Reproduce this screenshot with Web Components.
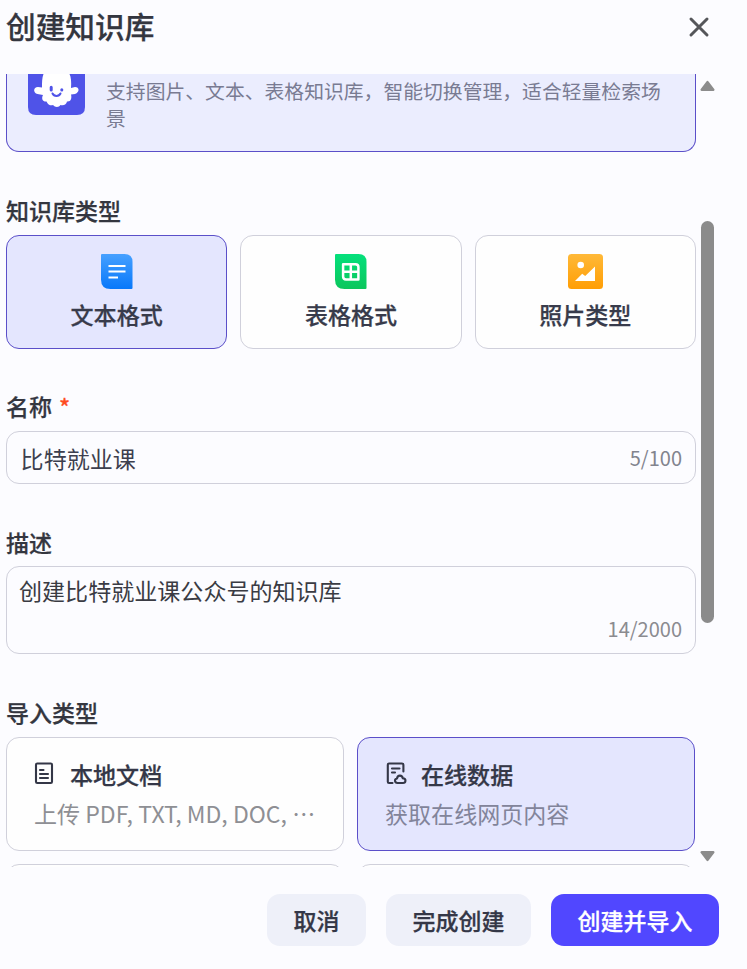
<!DOCTYPE html>
<html lang="zh-CN">
<head>
<meta charset="utf-8">
<title>创建知识库</title>
<style>
html,body{margin:0;height:100%;background:#fcfcff;overflow:hidden}
body{font-family:"Noto Sans CJK SC","Noto Sans",sans-serif;color:#34363f;font-size:23.05px}
</style>
</head>
<body>
<kb-dialog heading="创建知识库">
  <kb-banner>支持图片、文本、表格知识库，智能切换管理，适合轻量检索场景</kb-banner>
  <kb-section label="知识库类型">
    <kb-type kind="text" selected>文本格式</kb-type>
    <kb-type kind="table">表格格式</kb-type>
    <kb-type kind="photo">照片类型</kb-type>
  </kb-section>
  <kb-section label="名称" required><kb-field count="5/100">比特就业课</kb-field></kb-section>
  <kb-section label="描述" compact><kb-field multiline count="14/2000">创建比特就业课公众号的知识库</kb-field></kb-section>
  <kb-section label="导入类型" columns="2">
    <kb-import kind="file" heading="本地文档">上传 PDF, TXT, MD, DOC, …</kb-import>
    <kb-import kind="online" heading="在线数据" selected>获取在线网页内容</kb-import>
    <kb-import kind="none"></kb-import>
    <kb-import kind="none"></kb-import>
  </kb-section>
  <kb-button slot="footer">取消</kb-button>
  <kb-button slot="footer">完成创建</kb-button>
  <kb-button slot="footer" primary>创建并导入</kb-button>
</kb-dialog>
<script>
class Base extends HTMLElement{
  connectedCallback(){
    if(this.shadowRoot)return;
    this.attachShadow({mode:'open'}).innerHTML='<style>*{box-sizing:border-box}:host{box-sizing:border-box}'+this.css()+'</style>'+this.html();
  }
  attr(n){return this.getAttribute(n)||''}
}
const medium='font-weight:500;-webkit-text-stroke:.25px currentColor;';
customElements.define('kb-scrollbar',class extends Base{
  css(){return `:host{width:15px;flex:none;display:flex;flex-direction:column;align-items:center;padding:6px 0 5px}
    svg{display:block;width:15px;height:12px;flex:none;fill:#8c8c8c;stroke:#8c8c8c;stroke-width:2.600;stroke-linejoin:round}
    .track{flex:1;width:13px;padding-top:129px}.thumb{height:402px;border-radius:7px;background:#8b8b8b}`}
  html(){return `<svg viewBox="0 0 15 12"><path d="M7.500 2.200 13.200 9.800H1.800Z"/></svg><div class="track"><div class="thumb"></div></div><svg viewBox="0 0 15 12"><path d="M1.800 2.200H13.200L7.500 9.800Z"/></svg>`}
});
customElements.define('kb-dialog',class extends Base{
  css(){return `:host{display:flex;flex-direction:column;width:747px;height:969px}
    header{height:74px;flex:none;display:flex;justify-content:space-between;align-items:flex-start;padding:4px 37px 0 6px}
    h1{margin:0;font-size:29.7px;${medium}line-height:43px}
    header svg{width:22px;height:22px;margin-top:12px;stroke:#55565a;stroke-width:3;stroke-linecap:round}
    main{height:793px;flex:none;display:flex;overflow:hidden;padding-left:6px;gap:4px}
    .content{width:690px;display:flex;flex-direction:column;flex:none}
    footer{flex:1;display:flex;justify-content:flex-end;align-items:flex-start;gap:20px;padding:27px 28px 0 0}`}
  html(){return `<header><h1>${this.attr('heading')}</h1><svg viewBox="0 0 22 22"><path d="M3 3 19 19M19 3 3 19"/></svg></header>
    <main><div class="content"><slot></slot></div><kb-scrollbar></kb-scrollbar></main><footer><slot name="footer"></slot></footer>`}
});
customElements.define('kb-banner',class extends Base{
  css(){return `:host{display:flex;gap:21px;height:78px;flex:none;border:1px solid #5b4fc9;border-top:0;border-radius:0 0 13px 13px;background:#ebedfe;padding:0 26px 0 21px;color:#797b92;font-size:19.82px;line-height:27px}
    svg{width:57px;height:41px;flex:none;display:block}p{margin:3px 0 0;flex:1}`}
  html(){return `<svg viewBox="0 0 57 41"><path fill="#4f53e8" d="M0 0H57V33Q57 41 49 41H8Q0 41 0 33Z"/>
    <path fill="#fff" d="M15.500 0C14 4 14 8 14 13.500L10 13C5 13 5 19 9.500 20L15 21C13 25 15 28 18.500 27.500C20 31 23 32 25 31C27 33.500 31 33.500 32.500 31C36 32 38.500 30 39 27.500C43 28 44 24 43 20.500L47 20C52 18 51.500 13 47 13L43 14C43.500 8 43 3 41.500 0Z"/>
    <path d="M24.500 19.500C26 22.700 31 22.700 32.500 19.500" fill="none" stroke="#4f53e8" stroke-width="2" stroke-linecap="round"/><path d="M23.200 13.300V16M33.800 15.800V16" stroke="#4f53e8" stroke-width="3" stroke-linecap="round"/></svg><p><slot></slot></p>`}
});
customElements.define('kb-section',class extends Base{
  css(){return `:host{display:block;flex:none;margin-top:41px}:host([required]){margin-top:40px}
    :host([columns]){width:689px}
    h2{margin:0 0 8px;height:34px;font-size:23px;line-height:34px;${medium}}i{font-style:normal;color:#ff4b22;margin-left:7px}
    :host([compact]) h2{margin-bottom:7px}
    .row{display:grid;grid-auto-flow:column;grid-auto-columns:minmax(0,1fr);gap:13px}
    .two{grid-auto-flow:row;grid-template-columns:repeat(2,minmax(0,1fr))}`}
  html(){return `<h2>${this.attr('label')}${this.hasAttribute('required')?'<i>*</i>':''}</h2><div class="row ${this.attr('columns')?'two':''}"><slot></slot></div>`}
});
const card=`border:1px solid #d0d0db;border-radius:13px;background:#fefefe;height:114px;`;
const selected=`:host([selected]){background:#e4e6fe;border-color:#5b4fc9}`;
customElements.define('kb-type',class extends Base{
  css(){return `:host{display:flex;flex-direction:column;align-items:center;${card}padding-top:18px;${medium}line-height:34px;color:#383b4b}${selected}
    svg{display:block;width:36px;height:36px;margin-bottom:7px}`}
  html(){
    const k=this.attr('kind');
    const c={text:['#46a0ff','#0878fa'],table:['#05e07c','#0bc65c'],photo:['#ffb938','#ff9e05']}[k];
    const shape=k==='photo'?'<rect x="1" y="0" width="35" height="35" rx="3.500" fill="url(#g)"/>':'<path fill="url(#g)" d="M3 0H25.500Q33.500 0 33.500 8V34Q33.500 35 32.500 35H11.500Q2 35 2 25.500V1Q2 0 3 0Z"/>';
    const mark={
      text:'<path d="M9.500 12H26.500M9.500 17.500H26.500M9.500 23.500H19" stroke="#fff" stroke-width="2.100"/>',
      table:'<path d="M10.100 10.200H22.500Q25.400 10.200 25.400 13V25.400H13Q10.100 25.400 10.100 22.500ZM17.800 10.200V25.400M10 17.800H25.400" fill="none" stroke="#fff" stroke-width="2.500" stroke-linejoin="round"/>',
      photo:'<circle cx="13.700" cy="11" r="3.300" fill="#fff"/><path fill="#fff" d="M8 27 15.200 19.700 18.200 21.900 28 12.500V27Z"/>'}[k];
    return `<svg viewBox="0 0 36 36"><defs><linearGradient id="g" x2="0" y2="1"><stop stop-color="${c[0]}"/><stop offset="1" stop-color="${c[1]}"/></linearGradient></defs>${shape}${mark}</svg><span><slot></slot></span>`}
});
customElements.define('kb-field',class extends Base{
  css(){return `:host{display:flex;justify-content:space-between;align-items:center;height:53px;border:1px solid #d0d0db;border-radius:13px;padding:0 13px 0 13.600px;line-height:34px;color:#3d3f4e}
    .count{color:#82848e;font-size:20px;line-height:30px}
    :host([multiline]){height:88px;flex-direction:column;align-items:stretch;padding:6px 13px 9px 12px;color:#3a3b43}
    :host([multiline]) .count{align-self:flex-end;color:#8b8b90}`}
  html(){return `<span><slot></slot></span><span class="count">${this.attr('count')}</span>`}
});
customElements.define('kb-import',class extends Base{
  css(){return `:host{display:block;${card}padding:19px 26.500px 0 27px}${selected}
    .top{display:flex;align-items:center;gap:13px;${medium}line-height:34px;color:#343747}
    svg{display:block;width:23px;height:26px;fill:none;stroke:#343747;stroke-width:2.100;stroke-linejoin:round;stroke-linecap:round}
    p{margin:5px 0 0;line-height:34px;color:#8e8f94;white-space:nowrap}
    :host([selected]) p{color:#82849a}`}
  html(){
    const k=this.attr('kind');if(k==='none')return '';
    const p=k==='file'?'<rect x="2" y="2.500" width="16" height="19.500" rx="1.200"/><path d="M6 9H9.500M6 13H14M6 17H14"/>'
      :'<path d="M7.500 22H4Q2.800 22 2.800 20.700V3.800Q2.800 2.500 4 2.500H17Q18.400 2.500 18.400 3.800V10.500M7 7.500H14.500M7 11.500H10"/><path d="M12.500 22C9.500 22 9 18 12 17.500C12.500 13.700 17.200 13.700 17.800 17.300C21.600 17.500 21 22 18 22Z"/>';
    return `<div class="top"><svg viewBox="0 0 23 26">${p}</svg><span>${this.attr('heading')}</span></div><p><slot></slot></p>`}
});
customElements.define('kb-button',class extends Base{
  css(){return `:host{display:block;height:52px;padding:9px 26.500px;border-radius:13px;background:#eef0f9;font-size:23px;${medium}line-height:34px;color:#343747}
    :host([primary]){background:#5147ff;color:#fff}`}
  html(){return '<slot></slot>'}
});
</script>
</body>
</html>
